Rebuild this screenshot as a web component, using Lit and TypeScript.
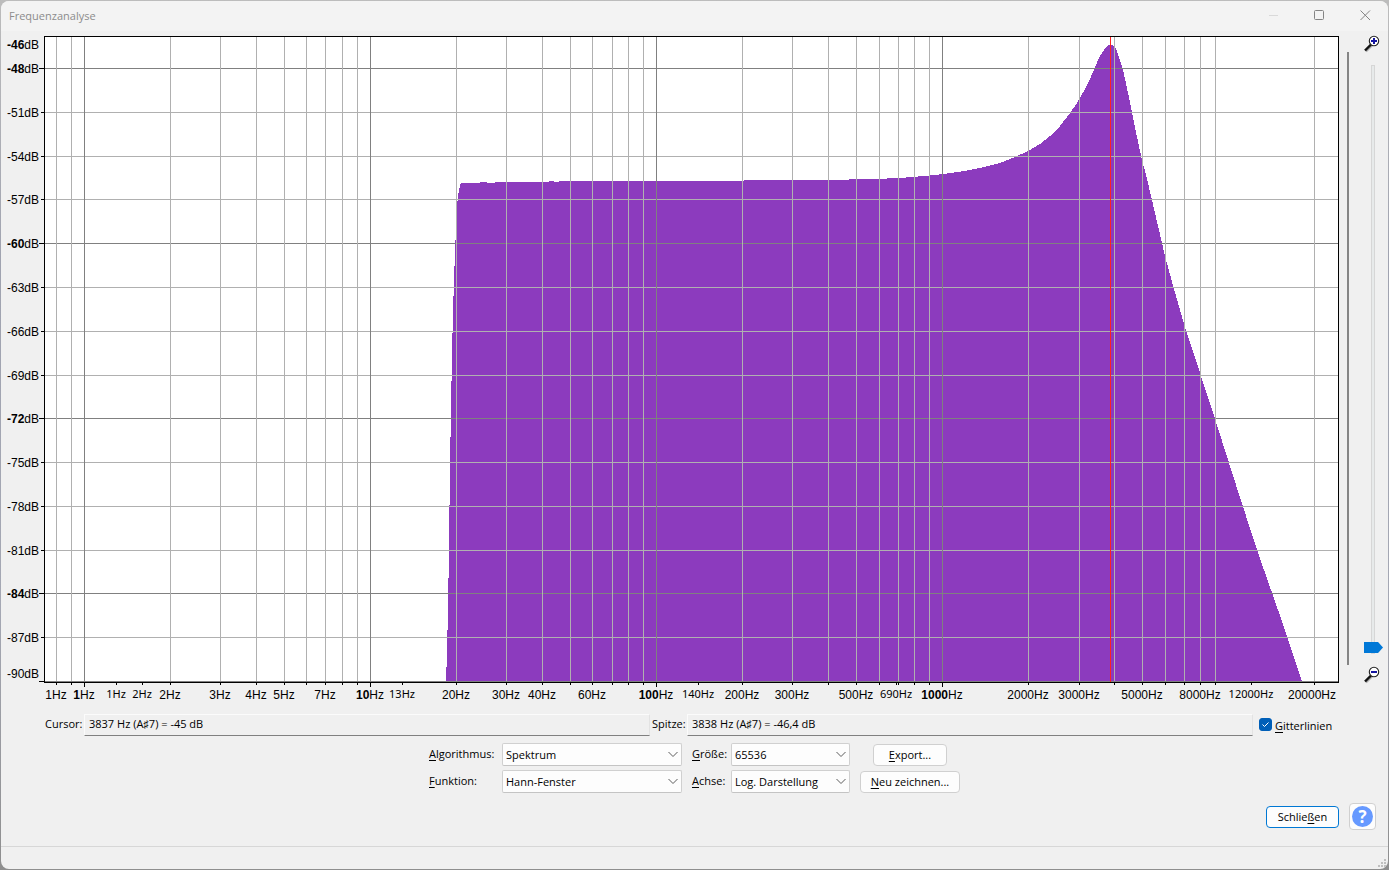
import { LitElement, html, svg, css, nothing } from "lit";
import { customElement, property, state } from "lit/decorators.js";
import { classMap } from "lit/directives/class-map.js";

interface Tick {
  hz: number;
  label?: string;
  kind: "major" | "minor" | "small";
}

const LOG_MIN = -40.1 / 286.15;
const LOG_MAX = 1253.9 / 286.15;
const DB_TOP = -45.77292;
const DB_BOTTOM = -90.03361;

const LABELLED = new Set([0.8, 1, 2, 3, 4, 5, 7, 10, 20, 30, 40, 60, 100, 200, 300, 500, 1000, 2000, 3000, 5000, 8000]);

function frequencyTicks(): Tick[] {
  const ticks: Tick[] = [
    { hz: 0.8, label: "1", kind: "minor" },
    { hz: 0.9, kind: "minor" },
  ];
  for (const base of [1, 10, 100, 1000]) {
    for (let n = 1; n <= 9; n++) {
      const hz = n * base;
      ticks.push({ hz, label: LABELLED.has(hz) ? String(hz) : undefined, kind: n === 1 ? "major" : "minor" });
    }
  }
  ticks.push({ hz: 20000, label: "20000", kind: "minor" });
  for (const [hz, label] of [[1.3, "1"], [1.6, "2"], [13, "13"], [140, "140"], [690, "690"], [12000, "12000"]] as [number, string][]) {
    ticks.push({ hz, label, kind: "small" });
  }
  return ticks;
}

/* Spectrum outline on a 1294 x 646 grid, origin at the plot's top left corner. */
const SPECTRUM: [number, number][] = [
  [402, 646], [403, 616], [404, 572], [405, 512], [406, 430], [407, 372], [408, 318], [409, 276], [410, 244],
  [411, 216], [412, 192], [413, 170], [414, 161], [415, 154], [416, 150], [417, 147], [436, 147], [436, 146],
  [443, 146], [443, 147], [451, 147], [451, 146], [505, 146], [505, 145], [510, 145], [510, 146], [515, 146],
  [515, 145], [620, 145], [700, 144.5], [780, 144], [830, 143], [856, 142], [880, 140], [900, 138], [920, 135],
  [940, 131], [956, 127], [971, 121], [984, 115], [996, 108], [1006, 100], [1016, 90], [1026, 77], [1031, 70],
  [1036, 62], [1041, 53], [1046, 43], [1051, 31], [1056, 20], [1060, 14], [1063, 10], [1065, 9], [1069, 9],
  [1072, 13], [1074, 18], [1076, 24], [1079, 34], [1081, 43], [1084, 57], [1087, 71], [1090, 86], [1093, 101],
  [1098, 124], [1102, 139], [1108, 164], [1114, 190], [1121, 220], [1130, 253], [1140, 288], [1156, 337],
  [1171, 383], [1192, 449], [1213, 514], [1241, 594], [1258, 646],
];

@customElement("spectrum-plot")
export class SpectrumPlot extends LitElement {
  static styles = css`
    :host { display: block; flex: 1; min-width: 0; min-height: 0; overflow: hidden; }
    .plot { display: block; width: 100%; height: 100%; contain: size; }
    .area { fill: #8c3bbe; }
    .frame { fill: #000; }
    .paper { fill: #fff; }
    .minor { fill: #b0b0b0; }
    .major { fill: #808080; }
    .marker { fill: #ff2020; }
    .scale { font: 12px "Liberation Sans", Arial, sans-serif; fill: #000; }
    .fine { font: 11px "Noto Sans", sans-serif; }
    .bold { font-weight: 700; }
  `;

  @property({ type: Boolean }) grid = true;
  @property({ type: Number }) cursorHz = 3837;
  @state() private width = 1338;
  @state() private height = 676;
  private observer?: ResizeObserver;

  connectedCallback() {
    super.connectedCallback();
    this.observer = new ResizeObserver(() => {
      this.width = this.clientWidth;
      this.height = this.clientHeight;
    });
    this.observer.observe(this);
  }

  disconnectedCallback() {
    this.observer?.disconnect();
    super.disconnectedCallback();
  }

  render() {
    const left = 43;
    const top = 5;
    const w = Math.max(100, this.width - left - 1);
    const h = Math.max(100, this.height - top - 25);
    const right = left + w;
    const bottom = top + h;
    const position = (hz: number) => left + ((Math.log10(hz) - LOG_MIN) / (LOG_MAX - LOG_MIN)) * w;
    const x = (hz: number) => Math.floor(position(hz));
    const y = (db: number) => top + Math.floor(((DB_TOP - db) / (DB_TOP - DB_BOTTOM)) * h);
    const ticks = frequencyTicks();
    const levels = Array.from({ length: 15 }, (_, i) => -48 - i * 3);
    const outline = SPECTRUM.map(([px, py]) => `${left + (px / 1294) * w},${top + (py / 646) * h}`).join(" ");
    const isMajor = (db: number) => db % 12 === 0;

    return html`
      <svg class="plot" role="img" aria-label="Spektrum">
        <g shape-rendering="crispEdges">
          <rect class="frame" x=${left} y=${top} width=${w + 1} height=${h + 1}></rect>
          <rect class="paper" x=${left + 1} y=${top + 1} width=${w - 1} height=${h - 1}></rect>
          <polygon class="area" points=${outline}></polygon>
          ${this.grid
            ? svg`
              ${levels.map((db) => svg`<rect class=${isMajor(db) || db === -90 ? "major" : "minor"} x=${left + 1} y=${Math.min(y(db), bottom - 1)} width=${w - 1} height="1"></rect>`)}
              ${ticks.filter((t) => t.kind !== "small").map((t) => svg`<rect class=${t.kind} x=${x(t.hz)} y=${top + 1} width="1" height=${h - 2}></rect>`)}`
            : nothing}
          <rect class="marker" x=${Math.round(position(this.cursorHz))} y=${top + 1} width="1" height=${h - 1}></rect>
          <rect class="frame" x=${left} y=${bottom} width=${w + 1} height="1"></rect>
          ${levels.map((db) => {
            const len = isMajor(db) || db === -90 ? 5 : 3;
            return svg`<rect class="frame" x=${left - len} y=${Math.min(y(db), bottom - 1)} width=${len} height="1"></rect>`;
          })}
          ${ticks.map((t) => svg`<rect class="frame" x=${x(t.hz)} y=${bottom + 1} width="1" height=${t.kind === "major" ? 4 : 2}></rect>`)}
        </g>
        ${[-46, ...levels].map((db) => {
          const mid = Math.min(Math.max(y(db), top + 8), bottom - 9);
          return svg`<text class="scale" x=${left - 5} y=${mid + 5} text-anchor="end"><tspan class=${isMajor(db) || db === -46 ? "bold" : ""}>${db}</tspan>dB</text>`;
        })}
        ${ticks.filter((t) => t.label).map((t) => {
          const cx = Math.min(x(t.hz), right - 26);
          return svg`<text class=${t.kind === "small" ? "scale fine" : "scale"} x=${cx} y=${bottom + (t.kind === "small" ? 16 : 17)} text-anchor="middle"><tspan class=${t.kind === "major" ? "bold" : ""}>${t.label}</tspan>Hz</text>`;
        })}
      </svg>
    `;
  }
}

@customElement("app-root")
export class AppRoot extends LitElement {
  static styles = css`
    :host {
      display: flex;
      height: 100vh;
      box-sizing: border-box;
      padding: 1px;
      background: linear-gradient(#bcbcbc, #a0a3b0 30%, #a5a8b4 70%, #8e8e8e);
      font: 11px/16px "Open Sans", "Noto Sans", sans-serif;
      color: #000;
    }
    * { box-sizing: border-box; }
    .window { flex: 1; min-width: 0; display: flex; flex-direction: column; background: #f0f0f0; border-radius: 8px; overflow: hidden; }
    .titlebar { flex: none; height: 30px; display: flex; align-items: flex-start; background: #f3f3f3; color: #8c8c8c; }
    .title { flex: 1; margin: 0; padding: 7px 0 0 8px; font-size: 11px; font-weight: 400; }
    .caption { width: 46px; height: 29px; padding: 0; border: 0; background: none; display: grid; place-items: center; }
    .main { flex: 1; min-height: 0; display: flex; }
    .side { width: 49px; flex: none; display: flex; }
    .pan { width: 2px; margin: 21px 12px 42px 8px; background: #858585; }
    .zoom { width: 24px; display: flex; flex-direction: column; align-items: center; padding: 4px 0 23px; gap: 12px; }
    .zoom svg { display: block; flex: none; }
    .slider { flex: 1; min-height: 0; width: 20px; margin: 0; appearance: none; background: none; writing-mode: vertical-lr; direction: rtl; }
    .slider::-webkit-slider-runnable-track {
      width: 4px; height: 100%; background: #e7eaea; border: 1px solid #d6d6d6;
    }
    .slider::-webkit-slider-thumb {
      appearance: none; width: 19px; height: 11px; margin-left: -8px; margin-right: 0; border: 0; border-radius: 0; background: #0078d7;
      clip-path: polygon(0 0, 74% 0, 100% 50%, 74% 100%, 0 100%);
    }
    .readouts { display: flex; align-items: flex-start; padding: 7px 49px 0 44px; }
    .readouts label { flex: none; padding-top: 2px; white-space: nowrap; }
    .cursor-label { width: 39px; }
    .peak-label { width: 37px; padding-left: 2px; }
    .readout {
      flex: 1; min-width: 0; height: 22px; padding: 0 4px 3px; font: inherit; color: #000; background: #f0f0f0;
      border: 1px solid; border-color: #fbfbfb #e3e3e3 #808080 #fbfbfb; outline: none;
    }
    .check { display: flex; align-items: center; gap: 3px; width: 86px; padding-left: 6px; height: 21px; white-space: nowrap; }
    .tick { display: grid; }
    .tick > * { grid-area: 1 / 1; margin: 0; }
    .tick input { appearance: none; width: 13px; height: 13px; border-radius: 3px; border: 1px solid #8a8a8a; background: #fff; }
    .tick input:checked { background: #005fb8; border-color: #005fb8; }
    .tick svg { pointer-events: none; }
    u { text-underline-offset: 2px; }
    .options { display: grid; grid-template-columns: 73px 180px 10px 39px 119px 10px 100px; row-gap: 4px; justify-content: center; align-items: center; padding-top: 7px; }
    .options label { align-self: start; padding-top: 3px; white-space: nowrap; }
    .g1 { grid-column: 1; }
    .g2 { grid-column: 2; }
    .g4 { grid-column: 4; }
    .g5 { grid-column: 5; }
    .g7 { grid-column: 7; }
    .combo { display: grid; }
    .combo > * { grid-area: 1 / 1; }
    .combo svg { justify-self: end; align-self: center; margin-right: 3px; pointer-events: none; }
    select { appearance: none; width: 100%; height: 23px; padding: 0 3px; font: inherit; color: #000; background: #fdfdfd; border: 1px solid #d0d0d0; border-bottom-color: #c4c4c4; border-radius: 2px; }
    .button { height: 22px; padding: 0 8px; font: inherit; line-height: 18px; color: #000; background: #fdfdfd; border: 1px solid #d0d0d0; border-radius: 4px; white-space: nowrap; justify-self: center; }
    .export { width: 74px; }
    .redraw { width: 100px; }
    .close { width: 73px; padding: 0; border-color: #0078d4; }
    .actions { display: flex; justify-content: flex-end; align-items: center; gap: 10px; padding: 10px 12px 16px; }
    .help { width: 27px; height: 27px; padding: 0; display: grid; place-items: center; background: #fdfdfd; border: 1px solid #d0d0d0; border-radius: 4px; }
    .glyph { font: 700 17px "Open Sans", sans-serif; fill: #fff; }
    .status { flex: none; height: 23px; border-top: 1px solid #d7d7d7; display: flex; justify-content: flex-end; align-items: flex-end; padding: 0 2px 2px; }
    .off { visibility: hidden; }
  `;

  @state() private grid = true;

  private chevron() {
    return html`<svg width="11" height="7" viewBox="0 0 11 7" aria-hidden="true"><path d="M.5 1 5 5.5 9.5 1" fill="none" stroke="#5c5c5c"></path></svg>`;
  }

  private lens(plus: boolean) {
    return html`<svg width="18" height="18" viewBox="0 0 18 18" aria-hidden="true">
      <path d="M2 16.5 8 10.5" stroke="#aaa" stroke-width="2"></path>
      <path d="M1 15.5 7 9.5" stroke="#111" stroke-width="2.4"></path>
      <circle cx="10" cy="6" r="4.7" fill="#fff" stroke="#222" stroke-width="1.1"></circle>
      <path d=${plus ? "M7 6h6M10 3v6" : "M7 6h6"} stroke="#1414a0" stroke-width="2"></path>
    </svg>`;
  }

  render() {
    return html`
      <div class="window">
        <header class="titlebar">
          <h1 class="title">Frequenzanalyse</h1>
          <button class="caption" aria-label="Minimieren" disabled>
            <svg width="11" height="11"><path d="M1 5.5h9" stroke="#d9d9d9"></path></svg>
          </button>
          <button class="caption" aria-label="Maximieren">
            <svg width="11" height="11"><rect x=".5" y=".5" width="9" height="9" rx="1" fill="none" stroke="#848484"></rect></svg>
          </button>
          <button class="caption" aria-label="Fenster schließen">
            <svg width="11" height="11"><path d="M.5.5l9.5 9.5M10 .5.5 10" stroke="#848484"></path></svg>
          </button>
        </header>

        <div class="main">
          <spectrum-plot .grid=${this.grid}></spectrum-plot>
          <div class="side">
            <div class="pan"></div>
            <div class="zoom">
              ${this.lens(true)}
              <input class="slider" type="range" min="0" max="100" value="0" aria-label="Zoom" />
              ${this.lens(false)}
            </div>
          </div>
        </div>

        <div class="readouts">
          <label class="cursor-label" for="cursor">Cursor:</label>
          <input class="readout" id="cursor" readonly value="3837 Hz (A♯7) = -45 dB" />
          <label class="peak-label" for="peak">Spitze:</label>
          <input class="readout" id="peak" readonly value="3838 Hz (A♯7) = -46,4 dB" />
          <div class="check">
            <span class="tick">
              <input type="checkbox" id="grid" .checked=${this.grid}
                @change=${(e: Event) => (this.grid = (e.target as HTMLInputElement).checked)} />
              <svg class=${classMap({ off: !this.grid })} width="13" height="13" aria-hidden="true"><path d="M3.5 6.5 5.5 8.5 9.5 4.5" fill="none" stroke="#fff"></path></svg>
            </span>
            <label for="grid"><u>G</u>itterlinien</label>
          </div>
        </div>

        <div class="options">
          <label class="g1" for="algorithm"><u>A</u>lgorithmus:</label>
          <span class="combo g2"><select id="algorithm"><option>Spektrum</option></select>${this.chevron()}</span>
          <label class="g4" for="size"><u>G</u>röße:</label>
          <span class="combo g5"><select id="size"><option>65536</option></select>${this.chevron()}</span>
          <button class="button export g7"><u>E</u>xport...</button>
          <label class="g1" for="function"><u>F</u>unktion:</label>
          <span class="combo g2"><select id="function"><option>Hann-Fenster</option></select>${this.chevron()}</span>
          <label class="g4" for="axis"><u>A</u>chse:</label>
          <span class="combo g5"><select id="axis"><option>Log. Darstellung</option></select>${this.chevron()}</span>
          <button class="button redraw g7"><u>N</u>eu zeichnen...</button>
        </div>

        <div class="actions">
          <button class="button close">Schlie<u>ß</u>en</button>
          <button class="help" aria-label="Hilfe">
            <svg width="21" height="21"><circle cx="10.5" cy="10.5" r="10.5" fill="#6699ff"></circle><text class="glyph" x="10.5" y="16.5" text-anchor="middle">?</text></svg>
          </button>
        </div>

        <footer class="status">
          <svg width="8" height="8" fill="#bfbfbf" aria-hidden="true">
            <path d="M6 0h2v2h-2zM3 3h2v2h-2zM6 3h2v2h-2zM0 6h2v2h-2zM3 6h2v2h-2zM6 6h2v2h-2z"></path>
          </svg>
        </footer>
      </div>
    `;
  }
}
